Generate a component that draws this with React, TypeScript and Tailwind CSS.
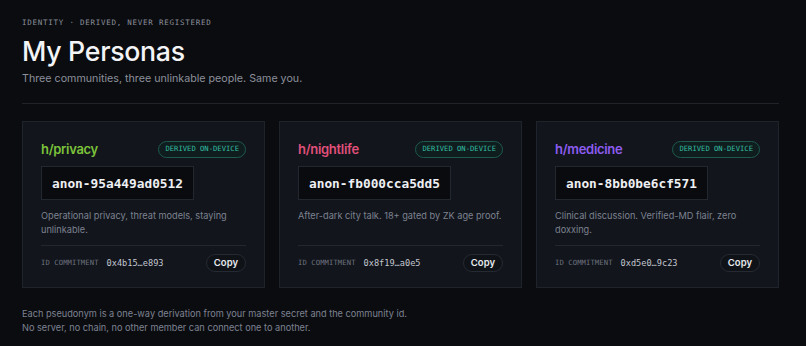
import React from "react";

interface Persona {
  community: string;
  color: string;
  handle: string;
  blurb: string;
  commitment: string;
}

const personas: Persona[] = [
  {
    community: "h/privacy",
    color: "text-[#7cc23a]",
    handle: "anon-95a449ad0512",
    blurb: "Operational privacy, threat models, staying unlinkable.",
    commitment: "0x4b15…e893",
  },
  {
    community: "h/nightlife",
    color: "text-[#e0507a]",
    handle: "anon-fb000cca5dd5",
    blurb: "After-dark city talk. 18+ gated by ZK age proof.",
    commitment: "0x8f19…a0e5",
  },
  {
    community: "h/medicine",
    color: "text-[#8d5cf0]",
    handle: "anon-8bb0be6cf571",
    blurb: "Clinical discussion. Verified-MD flair, zero doxxing.",
    commitment: "0xd5e0…9c23",
  },
];

const mono = "font-['DejaVu_Sans_Mono','Liberation_Mono',monospace]";
const sans = "font-['Inter','Noto_Sans',sans-serif]";

const PersonaCard: React.FC<{ p: Persona }> = ({ p }) => {
  return (
    <div className="w-[243px] h-[167px] bg-[#12151c] border border-[#1f232c] px-[18px] pt-[18px] flex flex-col">
      <div className="flex items-center justify-between h-[18px]">
        <span className={`${sans} ${p.color} text-[13px] font-semibold tracking-[-0.3px]`}>
          {p.community}
        </span>
        <span
          className={`${mono} text-[7.2px] text-[#34bfa2] border border-[#1e5a4f] bg-[#0f1d1f] rounded-full px-[6px] h-[17px] flex items-center`}
        >
          DERIVED ON-DEVICE
        </span>
      </div>
      <div className="mt-[8px] self-start h-[34px] px-[10px] bg-[#0a0b0f] border border-[#232730] flex items-center">
        <span className={`${mono} text-[12.8px] text-[#eef0f3] font-semibold`}>{p.handle}</span>
      </div>
      <p className={`${sans} mt-[9px] text-[9.2px] leading-[14px] text-[#7d8290] h-[28px]`}>{p.blurb}</p>
      <div className="mt-[8px] border-t border-[#232730] flex items-center justify-between pt-[8px]">
        <div className="flex items-center gap-[8px]">
          <span className={`${mono} text-[7.2px] tracking-[0.1px] text-[#6c717d]`}>ID COMMITMENT</span>
          <span className={`${mono} text-[8.6px] text-[#c3c7cf]`}>{p.commitment}</span>
        </div>
        <button
          className={`${sans} text-[9.5px] font-semibold text-[#e8eaee] bg-[#0f1217] border border-[#252a33] rounded-full h-[18px] px-[7px]`}
        >
          Copy
        </button>
      </div>
    </div>
  );
};

export default function App() {
  return (
    <div className="min-h-[346px] w-full bg-[#0b0c10] pl-[22px] pr-[27px] pt-[17px]">
      <div className={`${mono} text-[7.5px] tracking-[0.75px] text-[#8a8f9a]`}>
        IDENTITY · DERIVED, NEVER REGISTERED
      </div>
      <h1 className={`${sans} mt-[6px] text-[26.7px] leading-[34px] font-medium text-[#f3f4f6] tracking-[-0.3px]`}>
        My Personas
      </h1>
      <p className={`${sans} mt-[3px] text-[10.7px] text-[#8b909b]`}>
        Three communities, three unlinkable people. Same you.
      </p>
      <div className="mt-[16px] border-t border-[#1f222a]" />
      <div className="mt-[17px] flex gap-[14px]">
        {personas.map((p) => (
          <PersonaCard key={p.handle} p={p} />
        ))}
      </div>
      <div className={`${sans} mt-[19px] text-[9.2px] leading-[14px] text-[#7d8290]`}>
        <p>Each pseudonym is a one-way derivation from your master secret and the community id.</p>
        <p>No server, no chain, no other member can connect one to another.</p>
      </div>
    </div>
  );
}
